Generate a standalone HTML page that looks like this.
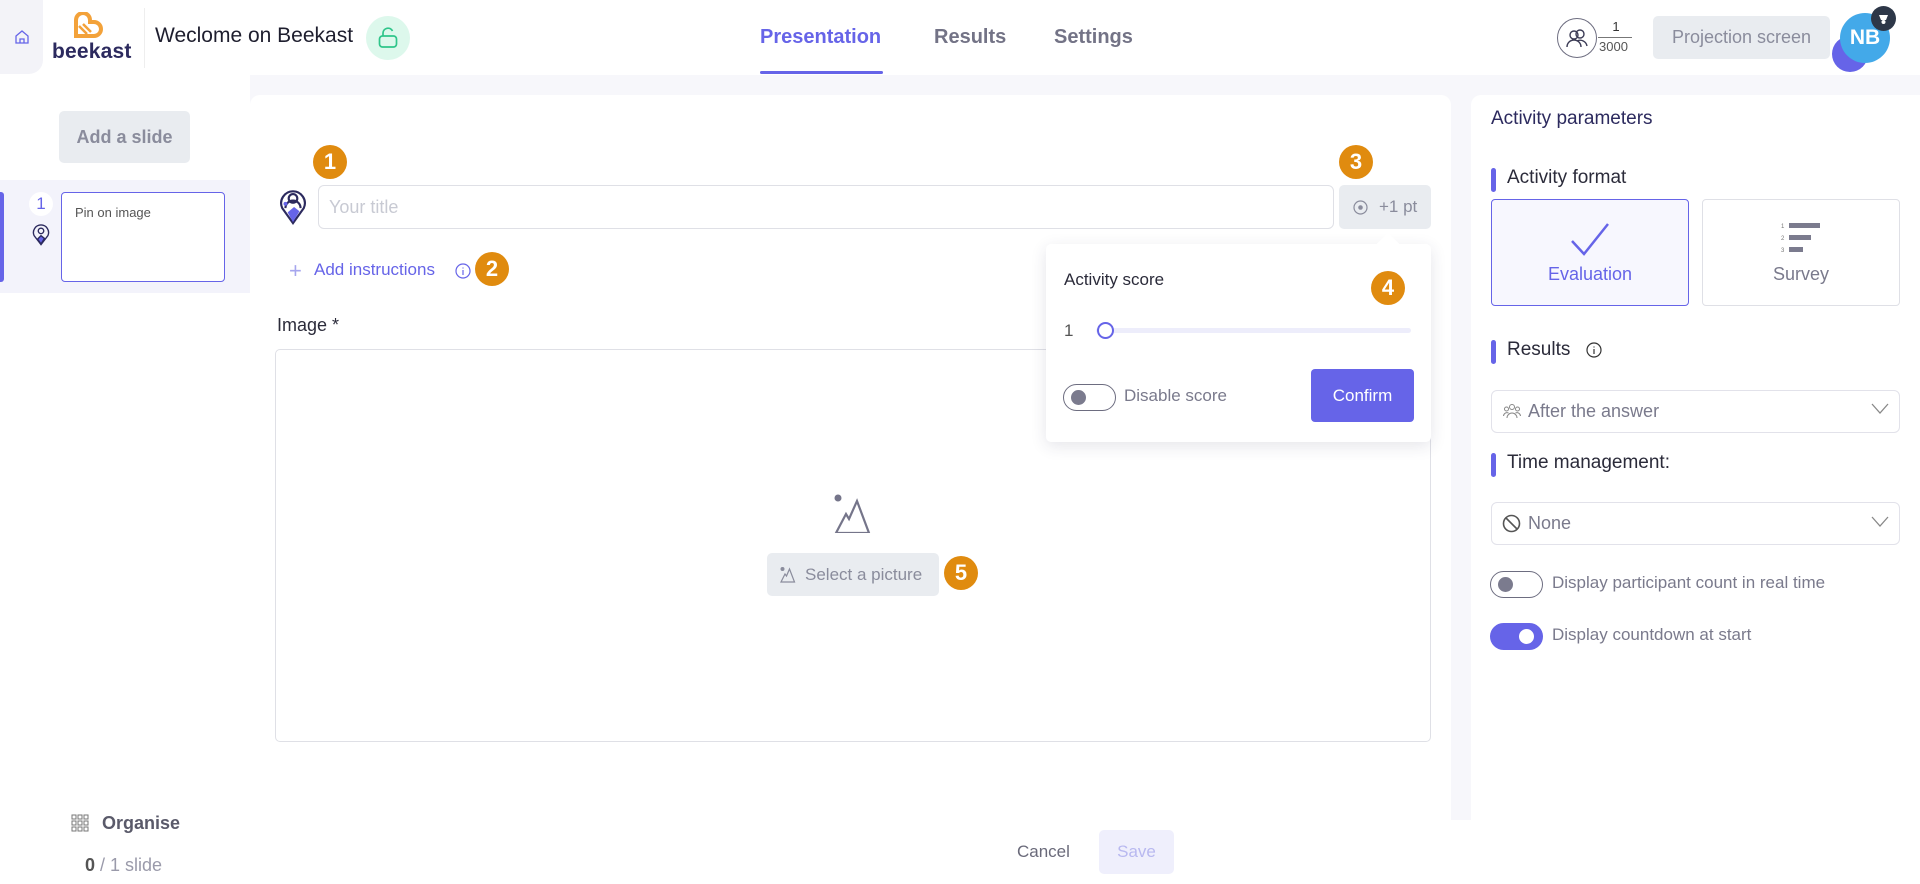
<!DOCTYPE html>
<html><head><meta charset="utf-8"><style>
*{box-sizing:border-box;margin:0;padding:0}
body{width:1920px;height:884px;overflow:hidden;background:#f7f7fb;font-family:"Liberation Sans",sans-serif;position:relative;color:#2b2b3a}
.a{position:absolute}
.badge{position:absolute;width:34px;height:34px;border-radius:50%;background:#e08b0f;color:#fff;font-weight:bold;font-size:22px;text-align:center;line-height:34px}
.sec{position:absolute;left:1491px;font-size:19px;color:#2b2b3a;padding-left:16px}
.sec:before{content:"";position:absolute;left:0;top:1px;width:5px;height:24px;border-radius:3px;background:#6664e8}
.dd{position:absolute;left:1491px;width:409px;height:43px;border:1px solid #e2e2ea;border-radius:6px;background:#fff;font-size:18px;color:#7a7a8c;line-height:41px;padding-left:36px}
.tog{position:absolute;width:53px;height:27px;border-radius:14px;border:1.5px solid #6d6d80;background:#fff}
.tog i{position:absolute;left:7px;top:5px;width:15px;height:15px;border-radius:50%;background:#7b7b8e}
</style></head><body>
<!-- header -->
<div class="a" style="left:0;top:0;width:1920px;height:75px;background:#fff"></div>
<div class="a" style="left:0;top:0;width:43px;height:74px;background:#f3f3f8;border-bottom-right-radius:14px"></div>
<svg class="a" style="left:14px;top:29px" width="16" height="16" viewBox="0 0 16 16" fill="none" stroke="#6664e8" stroke-width="1.3"><path d="M2 7L8 2l6 5v7H2z"/><path d="M6 14v-4h4v4"/></svg>
<svg class="a" style="left:73px;top:12px" width="30" height="30" viewBox="0 0 30 30"><path d="M3 15V8a7 7 0 0 1 14 0v2h4a7 7 0 0 1 0 14H3z" fill="none" stroke="#f3a23a" stroke-width="4"/><path d="M6 14l8 8M10 12l8 8" stroke="#f3a23a" stroke-width="2.5"/></svg>
<div class="a" style="left:52px;top:40px;font-size:21px;font-weight:bold;color:#2c2a5e;letter-spacing:0.2px">beekast</div>
<div class="a" style="left:144px;top:8px;width:1px;height:60px;background:#eee"></div>
<div class="a" style="left:155px;top:24px;font-size:21px;color:#1e1e2e">Weclome on Beekast</div>
<div class="a" style="left:366px;top:16px;width:44px;height:44px;border-radius:50%;background:#ddf8ec"></div>
<svg class="a" style="left:378px;top:27px" width="20" height="22" viewBox="0 0 20 22" fill="none" stroke="#2fc58a" stroke-width="1.7"><rect x="1.5" y="9" width="17" height="11" rx="3"/><path d="M5 9V6a5 5 0 0 1 9.5-2"/></svg>
<div class="a" style="left:760px;top:26px;font-size:20px;color:#6664e8;font-weight:bold">Presentation</div>
<div class="a" style="left:760px;top:71px;width:123px;height:3px;background:#6664e8;border-radius:2px"></div>
<div class="a" style="left:934px;top:26px;font-size:20px;color:#737386;font-weight:bold">Results</div>
<div class="a" style="left:1054px;top:26px;font-size:20px;color:#737386;font-weight:bold">Settings</div>
<div class="a" style="left:1557px;top:18px;width:40px;height:40px;border-radius:50%;border:1.5px solid #6d6d80"></div>
<svg class="a" style="left:1566px;top:27px" width="22" height="22" viewBox="0 0 22 22" fill="none" stroke="#3b3b55" stroke-width="1.4"><circle cx="8" cy="8" r="4"/><circle cx="14" cy="7" r="4"/><path d="M1 20a7 7 0 0 1 14 0M11 14a7 7 0 0 1 10 5"/></svg>
<div class="a" style="left:1600px;top:19px;width:32px;text-align:center;font-size:13px;color:#333">1</div>
<div class="a" style="left:1598px;top:37px;width:34px;height:1px;background:#777"></div>
<div class="a" style="left:1599px;top:39px;font-size:13px;color:#555">3000</div>
<div class="a" style="left:1653px;top:16px;width:177px;height:43px;border-radius:5px;background:#e9ecf0;color:#8a8c9c;font-size:18px;text-align:center;line-height:43px">Projection screen</div>
<div class="a" style="left:1832px;top:36px;width:36px;height:36px;border-radius:50%;background:#6664e8"></div>
<div class="a" style="left:1840px;top:13px;width:50px;height:50px;border-radius:50%;background:#43a9e9;color:#fff;font-weight:bold;font-size:21px;text-align:center;line-height:50px">NB</div>
<div class="a" style="left:1871px;top:6px;width:25px;height:25px;border-radius:50%;background:#2d3748"></div>
<svg class="a" style="left:1877px;top:12px" width="13" height="13" viewBox="0 0 13 13"><path d="M2 3h9l-2 5H4z" fill="#fff"/><circle cx="6.5" cy="10" r="2" fill="#fff"/></svg>

<!-- left sidebar -->
<div class="a" style="left:0;top:75px;width:250px;height:809px;background:#fff"></div>
<div class="a" style="left:59px;top:111px;width:131px;height:52px;border-radius:5px;background:#e9ecf0;color:#8a8c9c;font-size:18px;text-align:center;line-height:52px;font-weight:bold">Add a slide</div>
<div class="a" style="left:0;top:180px;width:250px;height:113px;background:#f3f3fb"></div>
<div class="a" style="left:0;top:192px;width:4px;height:90px;background:#6664e8;border-radius:0 3px 3px 0"></div>
<div class="a" style="left:29px;top:192px;width:24px;height:24px;border-radius:50%;background:#fff;color:#6664e8;font-size:17px;text-align:center;line-height:24px">1</div>
<svg class="a" style="left:32px;top:224px" width="18" height="22" viewBox="0 0 26 32" fill="none" stroke="#2c2a5e" stroke-width="2"><path d="M13 30L3 17a11 11 0 1 1 20 0z"/><circle cx="13" cy="10" r="4"/><path d="M8 22l5-5 5 4-5 8z" fill="#6664e8"/></svg>
<div class="a" style="left:61px;top:192px;width:164px;height:90px;border:1.5px solid #6664e8;border-radius:4px;background:#fff;padding:12px 13px;font-size:13px;color:#555">Pin on image</div>
<svg class="a" style="left:71px;top:814px" width="18" height="18" viewBox="0 0 18 18" fill="none" stroke="#777" stroke-width="1"><rect x="1" y="1" width="4" height="4"/><rect x="7" y="1" width="4" height="4"/><rect x="13" y="1" width="4" height="4"/><rect x="1" y="7" width="4" height="4"/><rect x="7" y="7" width="4" height="4"/><rect x="13" y="7" width="4" height="4"/><rect x="1" y="13" width="4" height="4"/><rect x="7" y="13" width="4" height="4"/><rect x="13" y="13" width="4" height="4"/></svg>
<div class="a" style="left:102px;top:813px;font-size:18px;color:#5a5a6a;font-weight:bold">Organise</div>
<div class="a" style="left:85px;top:855px;font-size:18px;color:#9a9aaa"><b style="color:#555">0</b> / 1 slide</div>

<!-- main panel -->
<div class="a" style="left:250px;top:95px;width:1201px;height:725px;background:#fff;border-radius:10px 10px 0 0"></div>
<div class="a" style="left:250px;top:820px;width:1221px;height:64px;background:#fff"></div>
<div class="a" style="left:1017px;top:842px;font-size:17px;color:#6a6a7a">Cancel</div>
<div class="a" style="left:1099px;top:830px;width:75px;height:44px;border-radius:5px;background:#efeffc;color:#b8b8f0;font-size:17px;text-align:center;line-height:44px">Save</div>

<div class="badge" style="left:313px;top:145px">1</div>
<svg class="a" style="left:279px;top:188px" width="28" height="38" viewBox="0 0 26 34" fill="none" stroke="#2c2a5e" stroke-width="2"><path d="M13 32L3 18a11 11 0 1 1 20 0z"/><circle cx="13" cy="9" r="4"/><path d="M6 18a7 7 0 0 1 14 0"/><path d="M8 22l6-5 5 4-6 10z" fill="#6664e8" stroke="none"/><circle cx="6" cy="14" r="1.8" fill="#6664e8" stroke="none"/></svg>
<div class="a" style="left:318px;top:185px;width:1016px;height:44px;border:1px solid #dfe0e6;border-radius:6px;font-size:18px;color:#c8cad3;line-height:42px;padding-left:10px">Your title</div>
<div class="badge" style="left:1339px;top:145px">3</div>
<div class="a" style="left:1339px;top:185px;width:92px;height:44px;border-radius:5px;background:#e9ecf0;color:#8a8c9c;font-size:17px;line-height:44px;padding-left:40px">+1 pt</div>
<svg class="a" style="left:1353px;top:200px" width="15" height="15" viewBox="0 0 15 15"><circle cx="7.5" cy="7.5" r="6.5" fill="none" stroke="#8a8c9c" stroke-width="1.2"/><circle cx="7.5" cy="7.5" r="2.3" fill="#8a8c9c"/></svg>
<div class="a" style="left:289px;top:258px;font-size:22px;color:#a6a6ee">+</div>
<div class="a" style="left:314px;top:260px;font-size:17px;color:#6664e8">Add instructions</div>
<svg class="a" style="left:455px;top:263px" width="16" height="16" viewBox="0 0 16 16" fill="none" stroke="#6664e8" stroke-width="1.2"><circle cx="8" cy="8" r="7"/><path d="M8 7v5M8 4.5v1"/></svg>
<div class="badge" style="left:475px;top:252px">2</div>
<div class="a" style="left:277px;top:315px;font-size:18px;color:#2b2b3a">Image *</div>
<div class="a" style="left:275px;top:349px;width:1156px;height:393px;border:1px solid #dfe0e6;border-radius:5px"></div>
<svg class="a" style="left:832px;top:493px" width="40" height="40" viewBox="0 0 40 40" fill="none" stroke="#75758a" stroke-width="2.2"><circle cx="6" cy="5" r="3.5" fill="#75758a" stroke="none"/><path d="M4 40L14 21l3 5 8-18 12 32z"/></svg>
<div class="a" style="left:767px;top:553px;width:172px;height:43px;border-radius:5px;background:#e9ecf0;color:#8a8c9c;font-size:17px;line-height:43px;padding-left:38px">Select a picture</div>
<svg class="a" style="left:780px;top:567px" width="16" height="16" viewBox="0 0 16 16" fill="none" stroke="#8a8c9c" stroke-width="1.2"><circle cx="2.5" cy="2" r="1.4" fill="#8a8c9c"/><path d="M1 15l4-8 1.5 2 3-7 5 13z"/></svg>
<div class="badge" style="left:944px;top:556px">5</div>

<!-- popover -->
<div class="a" style="left:1046px;top:244px;width:385px;height:198px;background:#fff;border-radius:5px;box-shadow:0 4px 16px rgba(40,40,80,.12)"></div>
<div class="a" style="left:1380px;top:236px;width:16px;height:16px;background:#fff;transform:rotate(45deg)"></div>
<div class="a" style="left:1064px;top:270px;font-size:17px;color:#2b2b3a">Activity score</div>
<div class="badge" style="left:1371px;top:271px">4</div>
<div class="a" style="left:1064px;top:321px;font-size:17px;color:#555">1</div>
<div class="a" style="left:1096px;top:328px;width:315px;height:5px;background:#ededfb;border-radius:3px"></div>
<div class="a" style="left:1097px;top:322px;width:17px;height:17px;border-radius:50%;border:2px solid #6664e8;background:#fff"></div>
<div class="tog" style="left:1063px;top:384px"><i></i></div>
<div class="a" style="left:1124px;top:386px;font-size:17px;color:#7a7a8c">Disable score</div>
<div class="a" style="left:1311px;top:369px;width:103px;height:53px;border-radius:4px;background:#6664e8;color:#fff;font-size:17px;text-align:center;line-height:53px">Confirm</div>

<!-- right panel -->
<div class="a" style="left:1471px;top:95px;width:449px;height:789px;background:#fff;border-radius:10px 0 0 0"></div>
<div class="a" style="left:1491px;top:108px;font-size:19px;color:#2c2a5e">Activity parameters</div>
<div class="sec" style="top:167px">Activity format</div>
<div class="a" style="left:1491px;top:199px;width:198px;height:107px;border:1.5px solid #6664e8;border-radius:4px;background:#f7f7fe"></div>
<svg class="a" style="left:1570px;top:221px" width="40" height="36" viewBox="0 0 40 36" fill="none" stroke="#6664e8" stroke-width="2.5"><path d="M2 20l12 13L38 3"/></svg>
<div class="a" style="left:1491px;top:264px;width:198px;text-align:center;font-size:18px;color:#6664e8">Evaluation</div>
<div class="a" style="left:1702px;top:199px;width:198px;height:107px;border:1px solid #dfe0e6;border-radius:4px;background:#fff"></div>
<div class="a" style="left:1781px;top:221px;font-size:6px;color:#777;line-height:12px">1<br>2<br>3</div>
<div class="a" style="left:1789px;top:223px;width:31px;height:5px;background:#7b7b8e"></div>
<div class="a" style="left:1789px;top:235px;width:22px;height:5px;background:#7b7b8e"></div>
<div class="a" style="left:1789px;top:247px;width:14px;height:5px;background:#7b7b8e"></div>
<div class="a" style="left:1702px;top:264px;width:198px;text-align:center;font-size:18px;color:#7a7a8c">Survey</div>
<div class="sec" style="top:339px">Results</div>
<svg class="a" style="left:1586px;top:342px" width="16" height="16" viewBox="0 0 16 16" fill="none" stroke="#333" stroke-width="1.2"><circle cx="8" cy="8" r="7"/><path d="M8 7v5M8 4.5v1"/></svg>
<div class="dd" style="top:390px">After the answer</div>
<svg class="a" style="left:1503px;top:403px" width="18" height="16" viewBox="0 0 18 16" fill="none" stroke="#888" stroke-width="1"><circle cx="9" cy="4" r="2.5"/><circle cx="3.5" cy="6" r="2"/><circle cx="14.5" cy="6" r="2"/><path d="M4 15a5 5 0 0 1 10 0M0.5 13a3.5 3.5 0 0 1 5-3M17.5 13a3.5 3.5 0 0 0-5-3"/></svg>
<svg class="a" style="left:1871px;top:403px" width="18" height="12" viewBox="0 0 18 12" fill="none" stroke="#888" stroke-width="1.3"><path d="M1 1l8 9 8-9"/></svg>
<div class="sec" style="top:452px">Time management:</div>
<div class="dd" style="top:502px">None</div>
<svg class="a" style="left:1502px;top:514px" width="19" height="19" viewBox="0 0 19 19" fill="none" stroke="#555" stroke-width="1.6"><circle cx="9.5" cy="9.5" r="8"/><path d="M4 4l11 11"/></svg>
<svg class="a" style="left:1871px;top:516px" width="18" height="12" viewBox="0 0 18 12" fill="none" stroke="#888" stroke-width="1.3"><path d="M1 1l8 9 8-9"/></svg>
<div class="tog" style="left:1490px;top:571px"><i></i></div>
<div class="a" style="left:1552px;top:573px;font-size:17px;color:#7a7a8c">Display participant count in real time</div>
<div class="tog" style="left:1490px;top:623px;background:#6664e8;border-color:#6664e8"><i style="left:28px;background:#fff"></i></div>
<div class="a" style="left:1552px;top:625px;font-size:17px;color:#7a7a8c">Display countdown at start</div>
</body></html>
